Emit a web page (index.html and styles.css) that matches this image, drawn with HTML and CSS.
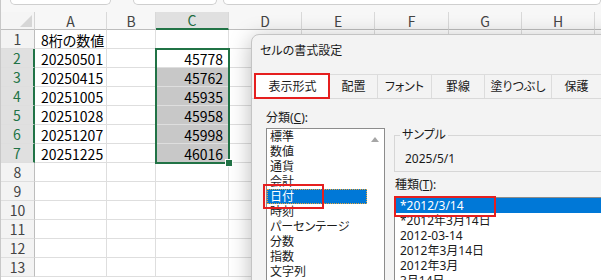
FILE: index.html
```html
<!DOCTYPE html>
<html lang="ja">
<head>
<meta charset="utf-8">
<title>セルの書式設定</title>
<link rel="stylesheet" href="styles.css">
</head>
<body>
<div class="app">
  <div class="topbar">
    <div class="tb tb1"></div>
    <div class="tb tb2"></div>
    <div class="tb tb3"></div>
  </div>

  <div class="sheet">
    <div class="corner"><span class="tri"></span></div>
    <div class="ch">A</div><div class="ch">B</div><div class="ch sel">C</div><div class="ch">D</div><div class="ch">E</div><div class="ch">F</div><div class="ch">G</div><div class="ch">H</div><div class="ch"></div>

    <div class="rh">1</div><div class="c">8桁の数値</div><div class="c"></div><div class="c"></div><div class="c"></div><div class="c"></div><div class="c"></div><div class="c"></div><div class="c"></div><div class="c"></div>
    <div class="rh sel">2</div><div class="c">20250501</div><div class="c"></div><div class="c n">45778</div><div class="c"></div><div class="c"></div><div class="c"></div><div class="c"></div><div class="c"></div><div class="c"></div>
    <div class="rh sel">3</div><div class="c">20250415</div><div class="c"></div><div class="c n g">45762</div><div class="c"></div><div class="c"></div><div class="c"></div><div class="c"></div><div class="c"></div><div class="c"></div>
    <div class="rh sel">4</div><div class="c">20251005</div><div class="c"></div><div class="c n g">45935</div><div class="c"></div><div class="c"></div><div class="c"></div><div class="c"></div><div class="c"></div><div class="c"></div>
    <div class="rh sel">5</div><div class="c">20251028</div><div class="c"></div><div class="c n g">45958</div><div class="c"></div><div class="c"></div><div class="c"></div><div class="c"></div><div class="c"></div><div class="c"></div>
    <div class="rh sel">6</div><div class="c">20251207</div><div class="c"></div><div class="c n g">45998</div><div class="c"></div><div class="c"></div><div class="c"></div><div class="c"></div><div class="c"></div><div class="c"></div>
    <div class="rh sel">7</div><div class="c">20251225</div><div class="c"></div><div class="c n g">46016</div><div class="c"></div><div class="c"></div><div class="c"></div><div class="c"></div><div class="c"></div><div class="c"></div>
    <div class="rh">8</div><div class="c"></div><div class="c"></div><div class="c"></div><div class="c"></div><div class="c"></div><div class="c"></div><div class="c"></div><div class="c"></div><div class="c"></div>
    <div class="rh">9</div><div class="c"></div><div class="c"></div><div class="c"></div><div class="c"></div><div class="c"></div><div class="c"></div><div class="c"></div><div class="c"></div><div class="c"></div>
    <div class="rh">10</div><div class="c"></div><div class="c"></div><div class="c"></div><div class="c"></div><div class="c"></div><div class="c"></div><div class="c"></div><div class="c"></div><div class="c"></div>
    <div class="rh">11</div><div class="c"></div><div class="c"></div><div class="c"></div><div class="c"></div><div class="c"></div><div class="c"></div><div class="c"></div><div class="c"></div><div class="c"></div>
    <div class="rh">12</div><div class="c"></div><div class="c"></div><div class="c"></div><div class="c"></div><div class="c"></div><div class="c"></div><div class="c"></div><div class="c"></div><div class="c"></div>
    <div class="rh">13</div><div class="c"></div><div class="c"></div><div class="c"></div><div class="c"></div><div class="c"></div><div class="c"></div><div class="c"></div><div class="c"></div><div class="c"></div>

    <div class="selection"><span class="handle"></span></div>
  </div>

  <div class="dialog">
    <div class="dlg-title">セルの書式設定</div>
    <div class="tabs">
      <div class="tab active w1">表示形式</div>
      <div class="tab w2">配置</div>
      <div class="tab w3">フォント</div>
      <div class="tab w4">罫線</div>
      <div class="tab w5">塗りつぶし</div>
      <div class="tab w6">保護</div>
    </div>
    <div class="dlg-body">
      <div class="col-left">
        <div class="lbl">分類(<u>C</u>):</div>
        <div class="listbox cats">
          <ul class="items">
            <li>標準</li>
            <li>数値</li>
            <li>通貨</li>
            <li>会計</li>
            <li class="picked focus">日付</li>
            <li>時刻</li>
            <li>パーセンテージ</li>
            <li>分数</li>
            <li>指数</li>
            <li>文字列</li>
          </ul>
          <div class="vscroll"><span class="arrow-up"></span></div>
        </div>
      </div>
      <div class="col-right">
        <div class="group">
          <span class="legend">サンプル</span>
          <div class="sample">2025/5/1</div>
        </div>
        <div class="lbl">種類(<u>T</u>):</div>
        <ul class="listbox types">
          <li class="picked">*2012/3/14</li>
          <li>*2012年3月14日</li>
          <li>2012-03-14</li>
          <li>2012年3月14日</li>
          <li>2012年3月</li>
          <li>3月14日</li>
        </ul>
      </div>
    </div>
  </div>

  <div class="redbox r1"></div>
  <div class="redbox r2"></div>
  <div class="redbox r3"></div>
</div>
</body>
</html>
```

FILE: styles.css
```css
* { box-sizing: border-box; margin: 0; padding: 0; }
html, body { width: 601px; height: 280px; overflow: hidden; background: #fff; }
body {
  font-family: "Noto Sans CJK JP", sans-serif;
  font-feature-settings: "palt";
  color: #000;
}
.app { position: relative; width: 601px; height: 280px; overflow: hidden; border-left: 1px solid #c8c8c8; }

/* top formula strip */
.topbar { height: 12px; background: #f7f7f7; display: flex; align-items: flex-start; }
.tb { height: 5px; background: #fff; border: 1px solid #cfcfcf; border-top: none; border-radius: 0 0 5px 5px; }
.tb1 { margin-left: 9px; width: 101px; }
.tb2 { margin-left: 22px; width: 84px; }
.tb3 { margin-left: 6px; flex: 1; }

/* sheet grid */
.sheet {
  position: relative;
  display: grid;
  grid-template-columns: 34px 72px 49px 73px 73px 73px 74px 73px 73px 1fr;
  grid-template-rows: 18px repeat(13, 19px);
  font-size: 14px;
  line-height: 1;
}
.corner {
  background: #f5f5f5;
  border-right: 1px solid #d4d4d4;
  border-bottom: 1px solid #bdbdbd;
  display: flex; justify-content: flex-end; align-items: flex-end;
  padding: 0 2px 2px 0;
}
.tri { width: 0; height: 0; border-left: 12px solid transparent; border-bottom: 12px solid #d6d6d6; }
.ch {
  background: #f7f7f7;
  border-right: 1px solid #d9d9d9;
  border-bottom: 1px solid #bdbdbd;
  display: flex; align-items: center; justify-content: center;
  color: #444;
}
.ch.sel { background: #e0e0e0; color: #1e6b41; border-bottom: 2px solid #217346; }
.rh {
  background: #f3f3f3;
  border-right: 1px solid #bdbdbd;
  border-bottom: 1px solid #dedede;
  display: flex; align-items: center; justify-content: center;
  color: #444;
}
.rh.sel { background: #e0e0e0; color: #217346; border-right: 2px solid #217346; }
.c {
  border-right: 1px solid #dedede;
  border-bottom: 1px solid #dedede;
  display: flex; align-items: center;
  padding: 1px 6px 0;
  white-space: nowrap;
}
.c.n { justify-content: flex-end; padding-right: 5px; }
.c.g { background: #c8c8c8; }
.selection {
  position: absolute;
  left: 154px; top: 36px;
  width: 75px; height: 116px;
  border: 2px solid #217346;
}
.handle {
  position: absolute; right: -4px; bottom: -4px;
  width: 6px; height: 6px;
  background: #217346;
  outline: 1px solid #fff;
}

/* dialog */
.dialog {
  position: absolute; left: 250px; top: 34px;
  width: 380px; height: 270px;
  background: #f3f3f3;
  border: 1px solid #c4c4c4;
  border-radius: 8px;
  box-shadow: 0 4px 22px rgba(0, 0, 0, 0.28);
  font-family: "Noto Sans", "Noto Sans CJK JP", sans-serif;
  font-size: 12px;
  color: #1a1a1a;
}
.dlg-title { padding: 8px 0 15px 8px; line-height: 16px; }
.tabs { display: flex; padding-left: 3px; height: 25px; border-bottom: 1px solid #d9d9d9; }
.tab {
  height: 24px; line-height: 23px; text-align: center;
  border: 1px solid #dcdcdc; border-bottom: none; margin-right: -1px;
  background: #f3f3f3;
}
.tab.active { background: #fff; }
.w1 { width: 75px; } .w2 { width: 49px; } .w3 { width: 55px; }
.w4 { width: 54px; } .w5 { width: 68px; } .w6 { width: 51px; }

.dlg-body { display: flex; gap: 9px; padding: 11px 0 0 14px; }
.lbl { line-height: 16px; }
.col-left { width: 121px; }
.col-left .lbl { margin-bottom: 2px; }
.listbox { background: #fff; border: 1px solid #8c8c8c; list-style: none; }
.cats { height: 160px; display: flex; }
.items { list-style: none; flex: 1; }
.items li { height: 15px; line-height: 15px; padding-left: 3px; white-space: nowrap; }
.picked { background: #0078d7; color: #fff; }
.focus { outline: 1px dotted #e8a53a; outline-offset: -1px; }
.vscroll { width: 17px; display: flex; justify-content: center; padding-top: 8px; }
.arrow-up { width: 0; height: 0; border-left: 4.5px solid transparent; border-right: 4.5px solid transparent; border-bottom: 5px solid #a6a6a6; }

.col-right { width: 240px; padding-top: 25px; }
.group { position: relative; height: 37px; border: 1px solid #d6d6d6; padding: 15px 0 0 10px; }
.legend { position: absolute; top: -9px; left: 5px; padding: 0 2px; background: #f3f3f3; line-height: 16px; }
.sample { line-height: 16px; }
.col-right .lbl { margin: 5px 0 4px 1px; }
.types { height: 100px; }
.types li { height: 15px; line-height: 15px; padding-left: 5px; white-space: nowrap; }

/* annotation boxes */
.redbox { position: absolute; border: 2px solid #e51f1f; }
.r1 { left: 253px; top: 73px; width: 76px; height: 26px; }
.r2 { left: 262px; top: 184px; width: 61px; height: 25px; }
.r3 { left: 393px; top: 196px; width: 102px; height: 21px; }
```
